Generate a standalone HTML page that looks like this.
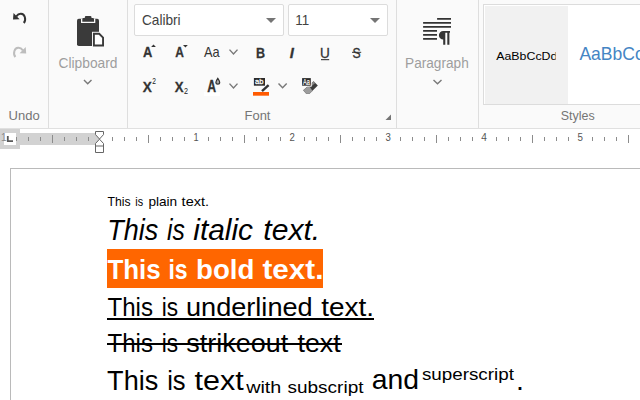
<!DOCTYPE html>
<html>
<head>
<meta charset="utf-8">
<title>Rich Edit</title>
<style>
html,body{margin:0;padding:0;}
body{width:640px;height:400px;overflow:hidden;background:#fff;position:relative;font-family:"Liberation Sans",sans-serif;}
.abs{position:absolute;}
#ribbon{position:absolute;left:0;top:0;width:640px;height:128px;background:#fafafa;border-bottom:1px solid #e0e0e0;}
.sep{position:absolute;top:0;width:1px;height:128px;background:#dedede;}
.combo{position:absolute;top:4px;height:32px;background:#fff;border:1px solid #dcdcdc;border-radius:2px;box-sizing:border-box;}
.combo i{position:absolute;right:7px;top:13px;width:0;height:0;border-left:5px solid transparent;border-right:5px solid transparent;border-top:5px solid #757575;}
svg{position:absolute;left:0;top:0;overflow:hidden;}
svg text{font-family:"Liberation Sans",sans-serif;}
#ruler{position:absolute;left:0;top:129px;width:640px;height:25px;background:#fff;}
#page{position:absolute;left:10px;top:168px;width:700px;height:300px;background:#fff;border:1px solid #bababa;box-sizing:border-box;}
#hl{position:absolute;left:107px;top:249px;width:216px;height:39px;background:#ff6600;}
</style>
</head>
<body>

<!-- ===== Ribbon ===== -->
<div id="ribbon">
  <div class="sep" style="left:48px"></div>
  <div class="sep" style="left:127px"></div>
  <div class="sep" style="left:396px"></div>
  <div class="sep" style="left:478px"></div>

  <div class="combo" style="left:134px;width:150px"><i></i></div>
  <div class="combo" style="left:288px;width:100px"><i></i></div>

  <!-- styles gallery -->
  <div class="abs" style="left:483px;top:4px;width:170px;height:101px;background:#fff;border:1px solid #dcdcdc;box-sizing:border-box;"></div>
  <div class="abs" style="left:485px;top:6px;width:83px;height:98px;background:#f1f1f1;"></div>

  <svg width="640" height="128" viewBox="0 0 640 128">
    <!-- undo -->
    <path d="M13.5 13 L13 19.600 L19.600 19.200Z" fill="#333"/>
    <path d="M16.300 16.300 C19 12.600 23.500 13 24.800 17 C25.600 19.500 24.800 21.800 23.800 23" fill="none" stroke="#333" stroke-width="2"/>
    <!-- redo -->
    <path d="M25.700 47 L26.200 53.600 L19.600 53.200Z" fill="#bdbdbd"/>
    <path d="M22.900 50.300 C20.200 46.600 15.700 47 14.400 51 C13.600 53.500 14.400 55.800 15.400 57" fill="none" stroke="#bdbdbd" stroke-width="2"/>

    <!-- clipboard -->
    <rect x="77" y="18.800" width="22" height="27.300" rx="1.800" fill="#3a3a3a"/>
    <path d="M81 23 V18.800 H95.300 V23Z" fill="#fafafa"/>
    <path d="M82.300 21.700 V19.200 Q82.300 18 83.500 18 H84.800 V17.200 Q84.800 16 86 16 H90.300 Q91.500 16 91.500 17.200 V18 H92.800 Q94 18 94 19.200 V21.700Z" fill="#3a3a3a"/>
    <rect x="92" y="31.800" width="13" height="15.500" fill="#fafafa"/>
    <path d="M93.900 33.750 H99.200 L103.050 37.700 V45.500 H93.900Z" fill="#fff" stroke="#3a3a3a" stroke-width="1.900"/>
    <path d="M84 80 L87.700 83.800 L91.500 80" fill="none" stroke="#787878" stroke-width="1.400"/>

    <!-- grow / shrink font markers -->
    <path d="M151.100 46.900 L153.500 44.400 L155.900 46.900Z" fill="#333"/>
    <path d="M183 45 L187.800 45 L185.400 47.500Z" fill="#333"/>
    <path d="M229.500 49.600 L233.500 54 L237.500 49.600" fill="none" stroke="#787878" stroke-width="1.400"/>
    <!-- U underline / S strike -->
    <rect x="321" y="59.100" width="8.200" height="1.100" fill="#333"/>
    <rect x="352" y="51.800" width="9.200" height="1" fill="#333"/>

    <!-- font colour -->
    <rect x="204" y="92" width="16" height="4" fill="#fff"/>
    <path d="M217.800 78.300 C219.200 80.300 219.700 81.300 219.700 82.200 A1.900 1.900 0 0 1 215.900 82.200 C215.900 81.300 216.400 80.300 217.800 78.300Z" fill="#aaa" stroke="#333" stroke-width="1.200"/>
    <path d="M229.500 83.600 L233.500 88 L237.500 83.600" fill="none" stroke="#787878" stroke-width="1.400"/>
    <!-- highlight -->
    <rect x="253.900" y="78" width="11.100" height="7.700" fill="#2b2b2b"/>
    <path d="M268.600 85.200 L262 91.200" stroke="#333" stroke-width="2.400" fill="none"/>
    <rect x="253" y="92" width="16" height="3.700" fill="#ff5a00"/>
    <path d="M278.500 83.400 L282.600 87.800 L286.700 83.400" fill="none" stroke="#787878" stroke-width="1.400"/>
    <!-- clear formatting -->
    <path d="M303.200 90.300 L313.600 81.300 L317.800 85.600 L309.500 93.800 L306.200 93.800Z" fill="#3c3c3c"/>
    <path d="M303.200 90.300 L308.800 85.600 L312.600 91 L309.500 93.800 L306.200 93.800Z" fill="#9c9c9c"/>
    <path d="M308.800 85.600 L313.600 81.300 L315.200 82.900 L310.300 87.300Z" fill="#8a8a8a"/>
    <rect x="301.200" y="77.300" width="10.500" height="9.300" fill="#fafafa"/>
    <rect x="302.100" y="78.100" width="8.700" height="7.600" fill="#2b2b2b"/>
    <!-- dialog launcher -->
    <path d="M391 114.500 V120 H385.500Z" fill="#757575"/>

    <!-- paragraph -->
    <path d="M437.100 18.900 H451 M423.100 22.900 H451 M423.100 26.900 H451 M423.100 30.900 H437 M423.100 34.900 H437 M423.100 38.900 H437" stroke="#333" stroke-width="1.800" fill="none"/>
    <path d="M444.200 31 H450 V32.700 H449.400 V44.800 H447.300 V32.700 H445.300 V44.800 H443.200 V39.600 A4.300 4.300 0 0 1 443.200 31Z" fill="#333"/>
    <path d="M433.500 80 L437.500 83.800 L441.500 80" fill="none" stroke="#787878" stroke-width="1.400"/>

    <text transform="translate(8.52,120.00) scale(0.9789,1)" font-size="13.3" fill="#757575">Undo</text>
<text transform="translate(244.53,120.00) scale(0.9744,1)" font-size="13.3" fill="#757575">Font</text>
<text transform="translate(560.75,120.00) scale(0.9368,1)" font-size="13.3" fill="#757575">Styles</text>
<text transform="translate(58.50,67.75) scale(0.9579,1)" font-size="14.4" fill="#9e9e9e">Clipboard</text>
<text transform="translate(405.05,67.75) scale(0.9479,1)" font-size="14.4" fill="#9e9e9e">Paragraph</text>
<text transform="translate(141.90,24.60) scale(0.9781,1)" font-size="14" fill="#424242">Calibri</text>
<text transform="translate(295.29,24.60) scale(0.9566,1)" font-size="14" fill="#424242">11</text>
<g opacity="0.999">
<text transform="translate(143.00,56.75) scale(0.8455,1)" font-size="15.3" font-weight="bold" fill="#333" stroke="#333" stroke-width="0.3">A</text>
<text transform="translate(175.30,56.75) scale(0.7818,1)" font-size="15.3" font-weight="bold" fill="#333" stroke="#333" stroke-width="0.3">A</text>
<text transform="translate(203.90,56.75) scale(0.8953,1)" font-size="14.3" fill="#333">Aa</text>
<text transform="translate(255.88,57.90) scale(0.8200,1)" font-size="15.3" font-weight="bold" fill="#333" stroke="#333" stroke-width="0.3">B</text>
<text transform="translate(289.80,57.90) scale(0.9800,1)" font-size="15.2" font-style="italic" font-weight="bold" fill="#333" stroke="#333" stroke-width="0.3">I</text>
<text transform="translate(320.09,57.90) scale(0.9111,1)" font-size="14.9" fill="#333" stroke="#333" stroke-width="0.3">U</text>
<text transform="translate(352.60,57.90) scale(0.8000,1)" font-size="15.2" fill="#333" stroke="#333" stroke-width="0.3">S</text>
<text transform="translate(142.70,92.00) scale(0.9400,1)" font-size="14.5" font-weight="bold" fill="#333" stroke="#333" stroke-width="0.3">X</text>
<text transform="translate(152.30,84.00) scale(0.7600,1)" font-size="8.8" fill="#222">2</text>
<text transform="translate(174.80,92.00) scale(0.9100,1)" font-size="14.5" font-weight="bold" fill="#333" stroke="#333" stroke-width="0.3">X</text>
<text transform="translate(183.90,93.60) scale(0.8200,1)" font-size="8.8" fill="#222">2</text>
<text transform="translate(207.20,91.75) scale(0.7818,1)" font-size="15.6" font-weight="bold" fill="#333" stroke="#333" stroke-width="0.3">A</text>
<text transform="translate(255.10,84.30) scale(0.9525,1)" font-size="8" fill="#fff" stroke="#fff" stroke-width="0.25">ab</text>
<text transform="translate(303.10,85.10) scale(0.6392,1)" font-size="8.7" fill="#fff" stroke="#fff" stroke-width="0.2">Aa</text>
</g>
    <svg x="485" y="6" width="70.600" height="98" viewBox="485 6 70.600 98"><text transform="translate(496.25,60.25) scale(1.0482,1)" font-size="11.8" fill="#000">AaBbCcDd</text></svg>
    <text transform="translate(579.40,60.40) scale(0.9749,1)" font-size="18" fill="#4585c4">AaBbCc</text>
  </svg>
</div>

<!-- ===== Ruler ===== -->
<div id="ruler">
  <div class="abs" style="left:0;top:4px;width:100px;height:12px;background:#d2d2d2"></div>
  <div class="abs" style="left:0;top:0;width:20px;height:20px;background:#d2d2d2"></div>
  <div class="abs" style="left:4px;top:4px;width:12px;height:12px;background:#fff"></div>
  <svg width="640" height="25" viewBox="0 129 640 25">
    <path d="M16.5 137V141M28.5 137V141M40.5 137V141M52.5 135V143M64.5 137V141M76.5 137V141M88.5 137V141M112.5 137V141M124.5 137V141M136.5 137V141M148.5 135V143M160.5 137V141M172.5 137V141M184.5 137V141M208.5 137V141M220.5 137V141M232.5 137V141M244.5 135V143M256.5 137V141M268.5 137V141M280.5 137V141M304.5 137V141M316.5 137V141M328.5 137V141M340.5 135V143M352.5 137V141M364.5 137V141M376.5 137V141M400.5 137V141M412.5 137V141M424.5 137V141M436.5 135V143M448.5 137V141M460.5 137V141M472.5 137V141M496.5 137V141M508.5 137V141M520.5 137V141M532.5 135V143M544.5 137V141M556.5 137V141M568.5 137V141M592.5 137V141M604.5 137V141M616.5 137V141M628.5 135V143M640.5 137V141" stroke="#8c8c8c" stroke-width="1" fill="none"/>
    <path d="M7.800 136 V141.200 H13" stroke="#5a5a5a" stroke-width="1.800" fill="none"/>
    <text x="1" y="141.300" font-size="10.300" fill="#888">1</text>
    <text transform="translate(193.45,141.30) scale(0.9000,1)" font-size="10.3" fill="#555">1</text>
<text transform="translate(289.50,141.30) scale(0.9333,1)" font-size="10.3" fill="#555">2</text>
<text transform="translate(385.50,141.30) scale(0.9333,1)" font-size="10.3" fill="#555">3</text>
<text transform="translate(481.20,141.30) scale(0.9833,1)" font-size="10.3" fill="#555">4</text>
<text transform="translate(577.50,141.30) scale(0.9500,1)" font-size="10.3" fill="#555">5</text>
    <path d="M95.500 131.500 H103.500 V134.600 L99.500 139 L95.500 134.600Z M99.500 139.200 L103.500 143.500 V152.500 H95.500 V143.500Z M95.500 146 H103.500" fill="#fff" stroke="#666" stroke-width="1"/>
  </svg>
</div>

<!-- ===== Document ===== -->
<div id="page"></div>
<div id="hl"></div>
<svg id="doctext" width="640" height="400" viewBox="0 0 640 400">
<text transform="translate(107.50,205.50) scale(0.9378,1)" font-size="13" fill="#000">This</text>
<text transform="translate(135.30,205.50) scale(0.8293,1)" font-size="13" fill="#000">is</text>
<text transform="translate(148.40,205.50) scale(1.0501,1)" font-size="13" fill="#000">plain</text>
<text transform="translate(181.60,205.50) scale(1.1188,1)" font-size="13" fill="#000">text.</text>
<text transform="translate(107.37,239.75) scale(0.9402,1)" font-size="28.7" font-style="italic" fill="#000">This</text>
<text transform="translate(167.00,239.75) scale(0.8590,1)" font-size="28.7" font-style="italic" fill="#000">is</text>
<text transform="translate(193.25,239.75) scale(1.0423,1)" font-size="28.7" font-style="italic" fill="#000">italic</text>
<text transform="translate(263.35,239.75) scale(1.0490,1)" font-size="28.7" font-style="italic" fill="#000">text.</text>
<text transform="translate(107.40,278.75) scale(0.9136,1)" font-size="28.4" font-weight="bold" fill="#fff">This</text>
<text transform="translate(168.44,278.75) scale(0.8110,1)" font-size="28.4" font-weight="bold" fill="#fff">is</text>
<text transform="translate(196.03,278.75) scale(0.9727,1)" font-size="28.4" font-weight="bold" fill="#fff">bold</text>
<text transform="translate(262.50,278.75) scale(1.0445,1)" font-size="28.4" font-weight="bold" fill="#fff">text.</text>
<text transform="translate(107.50,316.00) scale(0.9292,1)" font-size="25.9" fill="#000">This</text>
<text transform="translate(161.63,316.00) scale(0.8731,1)" font-size="25.9" fill="#000">is</text>
<text transform="translate(185.95,316.00) scale(1.0483,1)" font-size="25.9" fill="#000">underlined</text>
<text transform="translate(321.25,316.00) scale(1.0807,1)" font-size="25.9" fill="#000">text.</text>
<text transform="translate(107.50,352.00) scale(0.9292,1)" font-size="25.9" fill="#000">This</text>
<text transform="translate(161.63,352.00) scale(0.8731,1)" font-size="25.9" fill="#000">is</text>
<text transform="translate(186.25,352.00) scale(1.0419,1)" font-size="25.9" fill="#000">strikeout</text>
<text transform="translate(297.50,352.00) scale(1.0352,1)" font-size="25.9" fill="#000">text</text>
<text transform="translate(107.10,389.75) scale(0.9517,1)" font-size="28.5" fill="#000">This</text>
<text transform="translate(167.21,389.75) scale(0.8949,1)" font-size="28.5" fill="#000">is</text>
<text transform="translate(194.50,389.75) scale(1.0691,1)" font-size="28.5" fill="#000">text</text>
<text transform="translate(246.15,393.00) scale(1.1530,1)" font-size="17.2" fill="#000">with</text>
<text transform="translate(287.50,393.00) scale(1.1051,1)" font-size="17.2" fill="#000">subscript</text>
<text transform="translate(371.70,389.25) scale(0.9956,1)" font-size="28.5" fill="#000">and</text>
<text transform="translate(421.90,379.50) scale(1.0939,1)" font-size="17.2" fill="#000">superscript</text>
<text transform="translate(516.00,389.75) scale(1.0000,1)" font-size="28.5" fill="#000">.</text>
<rect x="107" y="318" width="267" height="2" fill="#000"/>
<rect x="107" y="343" width="235" height="2" fill="#000"/>
</svg>
</body>
</html>
